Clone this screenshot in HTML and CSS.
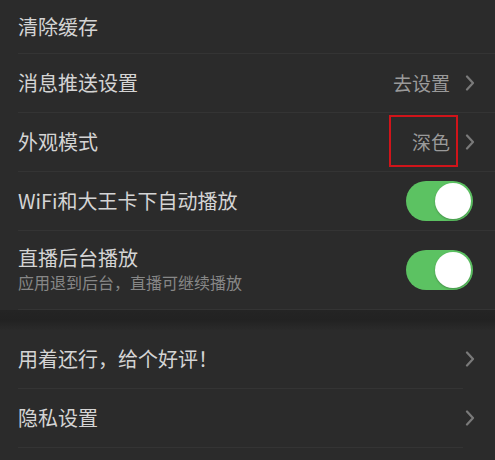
FILE: index.html
```html
<!DOCTYPE html>
<html lang="zh">
<head>
<meta charset="utf-8">
<link rel="stylesheet" href="styles.css">
</head>
<body>
<div class="page">
  <section class="group">
    <div class="row first"><span class="title">清除缓存</span></div>
    <div class="row">
      <span class="title">消息推送设置</span>
      <span class="right"><span class="value">去设置</span><svg class="chev" viewBox="0 0 10 16"><polyline points="2,1.5 8,8 2,14.5"/></svg></span>
    </div>
    <div class="row">
      <span class="title">外观模式</span>
      <span class="right"><span class="value marked">深色</span><svg class="chev" viewBox="0 0 10 16"><polyline points="2,1.5 8,8 2,14.5"/></svg></span>
    </div>
    <div class="row">
      <span class="title">WiFi和大王卡下自动播放</span>
      <span class="toggle"><span class="knob"></span></span>
    </div>
    <div class="row tall">
      <div class="texts">
        <span class="title">直播后台播放</span>
        <span class="sub">应用退到后台，直播可继续播放</span>
      </div>
      <span class="toggle"><span class="knob"></span></span>
    </div>
  </section>
  <div class="band"></div>
  <section class="group second">
    <div class="row">
      <span class="title">用着还行，给个好评！</span>
      <span class="right"><svg class="chev" viewBox="0 0 10 16"><polyline points="2,1.5 8,8 2,14.5"/></svg></span>
    </div>
    <div class="row">
      <span class="title">隐私设置</span>
      <span class="right"><svg class="chev" viewBox="0 0 10 16"><polyline points="2,1.5 8,8 2,14.5"/></svg></span>
    </div>
    <div class="row last"></div>
  </section>
</div>
</body>
</html>
```
FILE: styles.css
```css
html, body {
  margin: 0;
  padding: 0;
  background: #2b2b2b;
}
body {
  font-family: "Noto Sans CJK SC", "Noto Sans", sans-serif;
  width: 495px;
  height: 460px;
  overflow: hidden;
}
.page {
  display: flex;
  flex-direction: column;
}
.group {
  display: flex;
  flex-direction: column;
  padding-left: 18px;
}
.row {
  height: 58px;
  flex: none;
  display: flex;
  align-items: center;
  justify-content: space-between;
  border-bottom: 1px solid #343434;
  padding-right: 20px;
}
.row.first {
  height: 53px;
}
.row.tall {
  height: 78px;
}
.second .row {
  margin-right: 32px;
  padding-right: 0;
}
.second .row .right {
  margin-right: -12px;
}
.row.last {
  height: 12px;
  border-bottom: none;
}
.title {
  font-size: 20px;
  color: #d4d4d4;
  line-height: 28px;
}
.texts {
  display: flex;
  flex-direction: column;
  margin-top: -2px;
}
.texts .title {
  line-height: 26px;
}
.sub {
  font-size: 16px;
  color: #878787;
  line-height: 22px;
}
.right {
  display: flex;
  align-items: center;
  gap: 15px;
}
.value {
  font-size: 19px;
  color: #9a9a9a;
  line-height: 28px;
}
.value.marked {
  position: relative;
}
.value.marked::after {
  content: "";
  position: absolute;
  left: -23px;
  right: -8px;
  top: -13px;
  bottom: -11px;
  border: 2px solid #d0141a;
}
.chev {
  width: 10px;
  height: 16px;
  fill: none;
  stroke: #7a7a7a;
  stroke-width: 2.2;
  stroke-linecap: round;
  stroke-linejoin: round;
}
.toggle {
  width: 67px;
  height: 40px;
  border-radius: 20px;
  background: #5cc262;
  display: flex;
  align-items: center;
  justify-content: flex-end;
  padding: 0 2px;
  box-sizing: border-box;
  margin-right: 2px;
}
.knob {
  width: 36px;
  height: 36px;
  border-radius: 50%;
  background: #ffffff;
  box-shadow: 0 1px 2px rgba(0,0,0,0.25);
}
.band {
  height: 20px;
  flex: none;
  background: linear-gradient(#242424, #222222 50%, #2a2a2a);
}
```
